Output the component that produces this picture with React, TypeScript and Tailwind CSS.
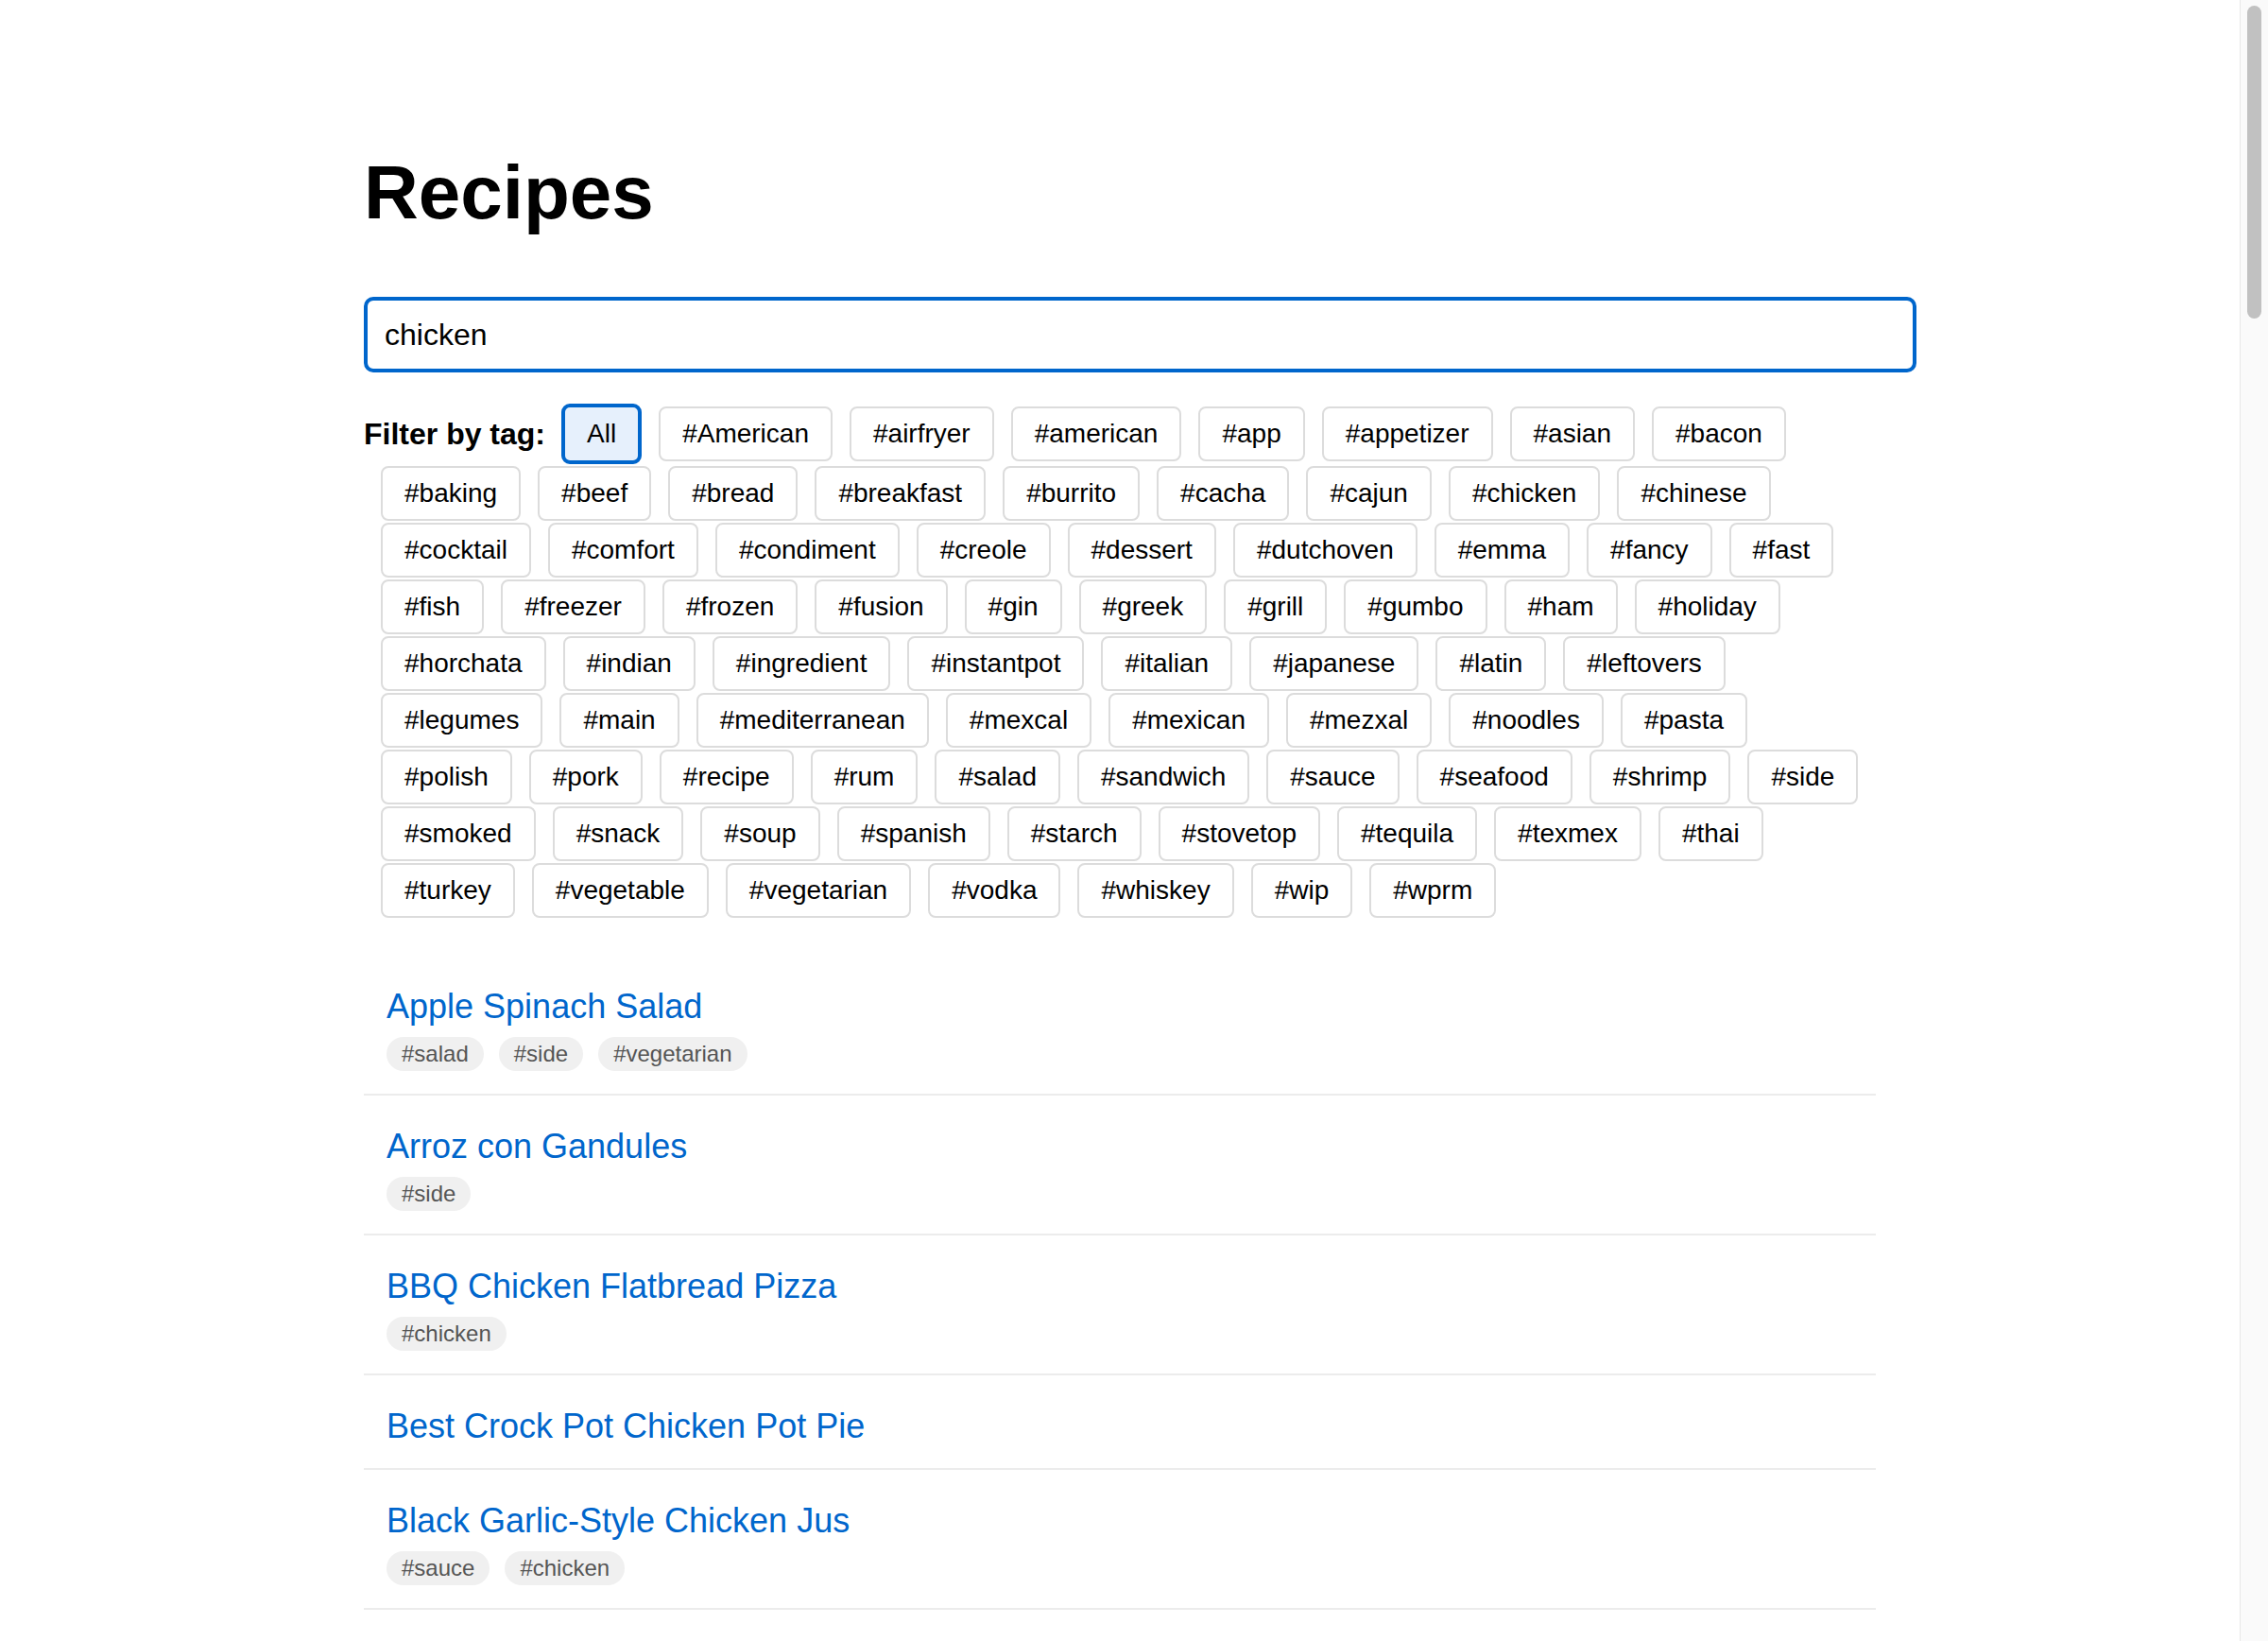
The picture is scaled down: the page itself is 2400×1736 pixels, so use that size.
import React from "react";

interface Recipe {
  name: string;
  tags: string[];
}

const allTags = [
  "American", "airfryer", "american", "app", "appetizer", "asian", "bacon",
  "baking", "beef", "bread", "breakfast", "burrito", "cacha", "cajun", "chicken", "chinese",
  "cocktail", "comfort", "condiment", "creole", "dessert", "dutchoven", "emma", "fancy", "fast",
  "fish", "freezer", "frozen", "fusion", "gin", "greek", "grill", "gumbo", "ham", "holiday",
  "horchata", "indian", "ingredient", "instantpot", "italian", "japanese", "latin", "leftovers",
  "legumes", "main", "mediterranean", "mexcal", "mexican", "mezxal", "noodles", "pasta",
  "polish", "pork", "recipe", "rum", "salad", "sandwich", "sauce", "seafood", "shrimp", "side",
  "smoked", "snack", "soup", "spanish", "starch", "stovetop", "tequila", "texmex", "thai",
  "turkey", "vegetable", "vegetarian", "vodka", "whiskey", "wip", "wprm",
];

const recipes: Recipe[] = [
  { name: "Apple Spinach Salad", tags: ["salad", "side", "vegetarian"] },
  { name: "Arroz con Gandules", tags: ["side"] },
  { name: "BBQ Chicken Flatbread Pizza", tags: ["chicken"] },
  { name: "Best Crock Pot Chicken Pot Pie", tags: [] },
  { name: "Black Garlic-Style Chicken Jus", tags: ["sauce", "chicken"] },
];

export default function App() {
  return (
    <div className="flex h-screen overflow-hidden bg-white text-black font-['Liberation_Sans',Arial,sans-serif]">
      <div className="flex-1 min-w-0 overflow-hidden">
        <main className="mx-auto w-[1600px] pt-[158px] pb-[160px]">
          <h1 className="text-[80px] leading-[92px] font-bold">Recipes</h1>

          <input
            type="text"
            defaultValue="chicken"
            className="mt-[64px] box-content block w-full h-[40px] py-[16px] pl-[18px] pr-[17px] border-4 border-[#0066cc] rounded-[10px] text-[32px] text-black outline-none"
          />

          <div className="mt-[33px] flex flex-wrap items-center gap-y-[2px]">
            <strong className="text-[32px] leading-[37px] font-bold">Filter by tag:</strong>
            <button className="ml-[17px] px-[23px] py-[12px] border-4 border-[#0066cc] bg-[#e6f0fc] rounded-[9px] text-[28px] leading-[32px]">
              All
            </button>
            {allTags.map((tag) => (
              <button
                key={tag}
                className="ml-[18px] px-[23px] py-[11px] border-2 border-[#dcdcdc] bg-white rounded-[8px] text-[28px] leading-[32px]"
              >
                #{tag}
              </button>
            ))}
          </div>

          <ul className="mt-[40px] list-none">
            {recipes.map((item) => (
              <li key={item.name} className="pl-[24px] pt-[33px] pb-[24px] border-b-2 border-[#ececec]">
                <a href="#" className="block text-[36px] leading-[41px] text-[#0066cc]">
                  {item.name}
                </a>
                {item.tags.length > 0 && (
                  <div className="mt-[12px] flex gap-[16px]">
                    {item.tags.map((t) => (
                      <span
                        key={t}
                        className="px-[16px] py-[4px] bg-[#f0f0f0] text-[#555555] rounded-full text-[24px] leading-[28px]"
                      >
                        #{t}
                      </span>
                    ))}
                  </div>
                )}
              </li>
            ))}
          </ul>
        </main>
      </div>

      {/* scrollbar */}
      <div className="w-[30px] shrink-0 h-screen bg-[#fafafa] border-l border-[#e8e8e8] pt-[6px] px-[7px]">
        <div className="h-[331px] rounded-full bg-[#c1c1c1]" />
      </div>
    </div>
  );
}
